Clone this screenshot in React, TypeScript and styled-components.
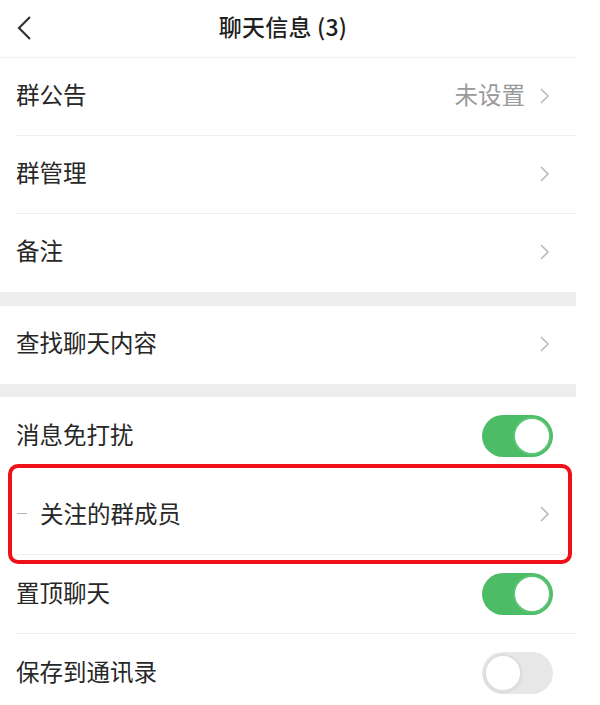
import React, { useState } from 'react';
import styled, { createGlobalStyle } from 'styled-components';

const GlobalStyle = createGlobalStyle`
    html, body {
        margin: 0;
        padding: 0;
        background: #ffffff;
    }
    body {
        font-family: "Noto Sans CJK SC", "Noto Sans", "Liberation Sans", sans-serif;
        color: #2c2c2c;
        -webkit-font-smoothing: antialiased;
    }
`;

const Page = styled.div`
    width: 576px;
    background: #ffffff;
`;

const Header = styled.header`
    height: 57px;
    border-bottom: 1px solid #f1f1f1;
    display: grid;
    grid-template-columns: 60px 1fr 60px;
    align-items: center;
    padding-right: 10px;
`;

const BackButton = styled.button`
    border: none;
    background: none;
    padding: 0 0 2px 16px;
    height: 57px;
    display: flex;
    align-items: center;
    cursor: pointer;
`;

const Title = styled.h1`
    margin: 0 0 4px;
    line-height: 1;
    text-align: center;
    font-size: 23px;
    font-weight: 500;
    color: #1f1f1f;
    letter-spacing: 0.2px;
`;

const Group = styled.section<{ $rowHeight: number }>`
    --row-h: ${(p) => p.$rowHeight}px;
`;

const GapBand = styled.div<{ $h: number }>`
    height: ${(p) => p.$h}px;
    background: #ededed;
`;

const Row = styled.div`
    position: relative;
    padding-left: 16px;
`;

const RowInner = styled.div<{ $last?: boolean }>`
    height: calc(var(--row-h) - 1px);
    border-bottom: 1px solid ${(p) => (p.$last ? 'transparent' : '#f0f0f0')};
    display: flex;
    align-items: center;
    padding-right: 23px;
`;

const Label = styled.span`
    flex: 1;
    display: flex;
    align-items: center;
    line-height: 1;
    padding-bottom: 3px;
    font-size: 23.5px;
    color: #272727;
`;

const Dash = styled.i`
    display: inline-block;
    width: 10px;
    height: 1px;
    background: #b5b5b5;
    margin: 0 13px 0 1px;
`;

const Value = styled.span`
    line-height: 1;
    padding-bottom: 3px;
    font-size: 23.5px;
    color: #9a9a9a;
    margin-right: 14px;
`;

const ChevronWrap = styled.span`
    display: flex;
    align-items: center;
    margin-right: 3px;
    padding-bottom: 2px;
`;

const Toggle = styled.button<{ $on: boolean }>`
    position: relative;
    width: 71px;
    height: 42px;
    border-radius: 21px;
    border: none;
    padding: 0;
    cursor: pointer;
    background: ${(p) => (p.$on ? '#4cbc67' : '#e7e7e7')};
    transition: background 0.2s;
    &::after {
        content: '';
        position: absolute;
        top: 2px;
        left: ${(p) => (p.$on ? '31px' : '2px')};
        width: 34px;
        height: 34px;
        border-radius: 50%;
        background: #ffffff;
        border: 2px solid ${(p) => (p.$on ? '#5cc476' : '#dedede')};
        box-shadow: ${(p) => (p.$on ? 'none' : '0 1px 2px rgba(0,0,0,0.08)')};
        transition: left 0.2s;
    }
`;

const Marker = styled.div`
    position: absolute;
    top: -12px;
    bottom: -9px;
    left: 8px;
    right: 4px;
    border: 4px solid #ee1118;
    border-radius: 10px;
    pointer-events: none;
`;

function BackIcon() {
    return (
        <svg width="16" height="26" viewBox="0 0 16 26">
            <path d="M14 2 L3 13 L14 24" fill="none" stroke="#333" strokeWidth="2.2" strokeLinejoin="miter" />
        </svg>
    );
}

function Chevron() {
    return (
        <svg width="11" height="18" viewBox="0 0 11 18">
            <path d="M2 2 L9 9 L2 16" fill="none" stroke="#b9b9b9" strokeWidth="1.6" />
        </svg>
    );
}

interface ItemProps {
    label: string;
    value?: string;
    last?: boolean;
    dash?: boolean;
    highlight?: boolean;
    toggle?: boolean;
    on?: boolean;
}

function Item(props: ItemProps) {
    const [on, setOn] = useState<boolean>(!!props.on);

    return (
        <Row>
            <RowInner $last={props.last}>
                <Label>
                    {props.dash && <Dash />}
                    {props.label}
                </Label>
                {props.value && <Value>{props.value}</Value>}
                {props.toggle ? (
                    <Toggle $on={on} onClick={() => setOn(!on)} aria-label={props.label} />
                ) : (
                    <ChevronWrap>
                        <Chevron />
                    </ChevronWrap>
                )}
            </RowInner>
            {props.highlight && <Marker />}
        </Row>
    );
}

export default function App() {
    return (
        <>
            <GlobalStyle />
            <Page>
                <Header>
                    <BackButton aria-label="back">
                        <BackIcon />
                    </BackButton>
                    <Title>聊天信息 (3)</Title>
                    <span />
                </Header>
                <Group $rowHeight={78}>
                    <Item label="群公告" value="未设置" />
                    <Item label="群管理" />
                    <Item label="备注" last />
                </Group>
                <GapBand $h={14} />
                <Group $rowHeight={78}>
                    <Item label="查找聊天内容" last />
                </Group>
                <GapBand $h={13} />
                <Group $rowHeight={79}>
                    <Item label="消息免打扰" toggle on last />
                    <Item label="关注的群成员" dash highlight />
                    <Item label="置顶聊天" toggle on />
                    <Item label="保存到通讯录" toggle last />
                </Group>
            </Page>
        </>
    );
}
